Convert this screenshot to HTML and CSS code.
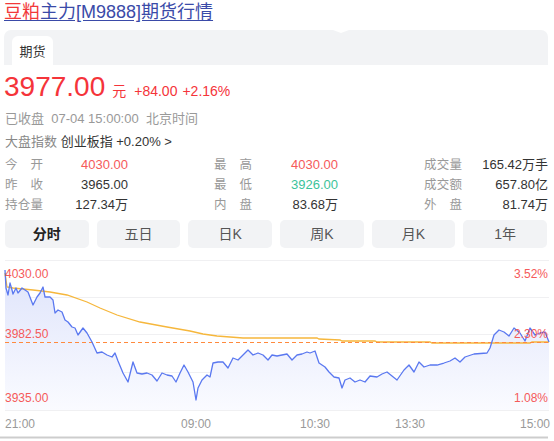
FILE: index.html
```html
<!DOCTYPE html>
<html lang="zh">
<head>
<meta charset="utf-8">
<title>豆粕主力[M9888]期货行情</title>
<link rel="stylesheet" href="styles.css">
</head>
<body>
<div class="page">
  <h1 class="title"><a class="title-link" href="#"><span class="title-red">豆粕</span>主力[M9888]期货行情</a></h1>
  <div class="tabbar">
    <div class="tab">期货</div>
    <span class="notch"></span>
  </div>
  <div class="price-row">
    <span class="price">3977.00</span>
    <span class="unit">元</span>
    <span class="change">+84.00</span>
    <span class="change">+2.16%</span>
  </div>
  <div class="status">已收盘&nbsp;&nbsp;07-04 15:00:00&nbsp;&nbsp;北京时间</div>
  <div class="index-row"><span class="muted">大盘指数</span> <span class="index-name">创业板指 +0.20%</span> <span class="chev">&gt;</span></div>
  <div class="stats">
    <div class="stat"><span class="lbl">今开</span><span class="val red">4030.00</span></div>
    <div class="stat"><span class="lbl">最高</span><span class="val red">4030.00</span></div>
    <div class="stat"><span class="lbl">成交量</span><span class="val">165.42万手</span></div>
    <div class="stat"><span class="lbl">昨收</span><span class="val">3965.00</span></div>
    <div class="stat"><span class="lbl">最低</span><span class="val green">3926.00</span></div>
    <div class="stat"><span class="lbl">成交额</span><span class="val">657.80亿</span></div>
    <div class="stat"><span class="lbl">持仓量</span><span class="val">127.34万</span></div>
    <div class="stat"><span class="lbl">内盘</span><span class="val">83.68万</span></div>
    <div class="stat"><span class="lbl">外盘</span><span class="val">81.74万</span></div>
  </div>
  <div class="periods">
    <div class="period active">分时</div>
    <div class="period">五日</div>
    <div class="period">日K</div>
    <div class="period">周K</div>
    <div class="period">月K</div>
    <div class="period">1年</div>
  </div>
  <svg class="chart" width="554" height="186" viewBox="0 255 554 186" xmlns="http://www.w3.org/2000/svg">
    <defs>
      <linearGradient id="fillg" x1="0" y1="0" x2="0" y2="1">
        <stop offset="0" stop-color="#dfe4fb"/>
        <stop offset="1" stop-color="#fafbff"/>
      </linearGradient>
    </defs>
    <g stroke="#f0f0f2" stroke-width="1">
      <line x1="5" y1="260.5" x2="549" y2="260.5"/>
      <line x1="5" y1="297.5" x2="549" y2="297.5"/>
      <line x1="5" y1="334.5" x2="549" y2="334.5"/>
      <line x1="5" y1="372.5" x2="549" y2="372.5"/>
      <line x1="5" y1="410.5" x2="549" y2="410.5"/>
    </g>
    <polygon fill="url(#fillg)" points="5,270 6,288 8,295 10,283 12,290 13,294 16,288 18,293 22,288 25,290 28,292 33,305 37,297 40,293 43,287 45,297 50,297 53,300 55,313 58,310 62,312 65,320 68,322 72,327 75,328 78,335 83,328 87,333 92,342 97,353 102,352 107,355 112,357 115,353 118,361 123,373 128,382 133,362 137,373 142,374 147,373 152,375 157,381 162,373 167,375 172,376 176,382 180,373 184,365 188,372 193,382 196,400 198,388 202,380 207,375 210,377 213,363 218,362 223,362 228,368 233,358 238,360 243,355 248,350 253,355 258,353 263,355 268,360 272,355 277,356 287,354 292,360 297,355 302,354 307,352 310,353 315,351 319,363 325,367 329,372 334,377 339,378 342,388 345,380 350,378 355,382 360,380 365,382 370,376 377,377 382,374 387,372 392,376 397,380 404,370 409,365 414,372 419,362 424,367 430,365 437,365 444,363 450,361 455,358 460,362 465,357 474,354 487,353 490,348 494,335 499,330 504,332 509,336 514,328 520,333 525,341 530,328 535,335 540,333 545,332 549,342 549,410 5,410"/>
    <polyline fill="none" stroke="#f6b73c" stroke-width="1.3" points="5,273 7,287 13,288 33,290 50,292 67,295 87,302 100,308 117,315 140,322 167,327 190,331 203,334 217,336 243,338 317,338 319,339 340,340 342,341 375,341 377,342 430,342 432,343 530,343 532,342 549,342"/>
    <line x1="5" y1="342.5" x2="549" y2="342.5" stroke="#ff8a3d" stroke-width="1" stroke-dasharray="4 3"/>
    <polyline fill="none" stroke="#5a78f0" stroke-width="1.3" stroke-linejoin="round" points="5,270 6,288 8,295 10,283 12,290 13,294 16,288 18,293 22,288 25,290 28,292 33,305 37,297 40,293 43,287 45,297 50,297 53,300 55,313 58,310 62,312 65,320 68,322 72,327 75,328 78,335 83,328 87,333 92,342 97,353 102,352 107,355 112,357 115,353 118,361 123,373 128,382 133,362 137,373 142,374 147,373 152,375 157,381 162,373 167,375 172,376 176,382 180,373 184,365 188,372 193,382 196,400 198,388 202,380 207,375 210,377 213,363 218,362 223,362 228,368 233,358 238,360 243,355 248,350 253,355 258,353 263,355 268,360 272,355 277,356 287,354 292,360 297,355 302,354 307,352 310,353 315,351 319,363 325,367 329,372 334,377 339,378 342,388 345,380 350,378 355,382 360,380 365,382 370,376 377,377 382,374 387,372 392,376 397,380 404,370 409,365 414,372 419,362 424,367 430,365 437,365 444,363 450,361 455,358 460,362 465,357 474,354 487,353 490,348 494,335 499,330 504,332 509,336 514,328 520,333 525,341 530,328 535,335 540,333 545,332 549,342"/>
    <g class="ylbl">
      <text x="5" y="278">4030.00</text>
      <text x="5" y="338">3982.50</text>
      <text x="5" y="402">3935.00</text>
      <text x="548" y="278" text-anchor="end">3.52%</text>
      <text x="548" y="338" text-anchor="end">2.30%</text>
      <text x="548" y="402" text-anchor="end">1.08%</text>
    </g>
    <g class="xlbl">
      <text x="5" y="428">21:00</text>
      <text x="196" y="428" text-anchor="middle">09:00</text>
      <text x="315" y="428" text-anchor="middle">10:30</text>
      <text x="410" y="428" text-anchor="middle">13:30</text>
      <text x="550" y="428" text-anchor="end">15:00</text>
    </g>
    <rect x="0" y="436.5" width="548" height="2" fill="#cdcdcd"/>
  </svg>
</div>
</body>
</html>
```

FILE: styles.css
```css
html, body {
  margin: 0;
  padding: 0;
  background: #fff;
}
body {
  font-family: "Liberation Sans", Arial, "Noto Sans CJK SC", sans-serif;
  color: #333;
  width: 554px;
  height: 441px;
  overflow: hidden;
}
.page {
  position: relative;
  width: 554px;
}
.title {
  margin: 0;
  padding-left: 4px;
  font-size: 18px;
  font-weight: normal;
  line-height: 24px;
  height: 24px;
}
.title-link {
  color: #3a4aa8;
  text-decoration: underline;
  text-underline-offset: 2px;
}
.title-red {
  color: #f2383a;
}
.tabbar {
  position: relative;
  margin: 6px 6px 0 4px;
  height: 35px;
  background: #f2f3f5;
  border-radius: 7px 7px 0 0;
  display: flex;
  align-items: flex-end;
  padding-left: 8px;
}
.tab {
  width: 41px;
  height: 29px;
  background: #fff;
  border-radius: 6px 6px 0 0;
  font-size: 13px;
  color: #333;
  display: flex;
  align-items: center;
  justify-content: center;
}
.notch {
  position: absolute;
  left: 329px;
  top: 0;
  width: 0;
  height: 0;
  border-left: 8px solid transparent;
  border-right: 8px solid transparent;
  border-top: 3px solid #fff;
}
.price-row {
  display: flex;
  align-items: baseline;
  padding-left: 4px;
  height: 40px;
  margin-top: 2px;
  color: #f5343a;
}
.price {
  font-size: 28px;
  line-height: 40px;
}
.unit {
  font-size: 14px;
  margin-left: 7px;
}
.change {
  font-size: 14px;
  margin-left: 5px;
}
.unit + .change {
  margin-left: 8px;
}
.status {
  padding-left: 5px;
  font-size: 13px;
  color: #999;
  height: 23px;
  line-height: 23px;
}
.index-row {
  padding-left: 5px;
  font-size: 13px;
  height: 24px;
  line-height: 24px;
}
.muted {
  color: #888;
}
.index-name {
  color: #333;
}
.chev {
  color: #333;
}
.stats {
  display: grid;
  grid-template-columns: 123px 124px 124px;
  justify-content: space-between;
  margin: 1px 6px 0 5px;
  font-size: 13px;
  line-height: 20px;
}
.stat {
  display: flex;
  justify-content: space-between;
  white-space: nowrap;
  height: 20px;
}
.lbl {
  display: inline-block;
  width: 38px;
  font-size: 12.5px;
  color: #999;
  white-space: nowrap;
  text-align: justify;
  text-align-last: justify;
}
.val {
  color: #333;
}
.red {
  color: #f55a5a;
}
.green {
  color: #3cc39a;
}
.periods {
  display: grid;
  grid-template-columns: repeat(6, 1fr);
  gap: 8px;
  margin: 5px 7px 0 5px;
}
.period {
  height: 28px;
  line-height: 28px;
  background: #f2f3f5;
  border-radius: 5px;
  text-align: center;
  font-size: 14px;
  color: #555;
}
.period.active {
  font-weight: bold;
  color: #222;
}
.chart {
  display: block;
  margin-top: 7px;
}
.ylbl text {
  font-family: "Liberation Sans", Arial, sans-serif;
  font-size: 12px;
  fill: #f55a5a;
}
.xlbl text {
  font-family: "Liberation Sans", Arial, sans-serif;
  font-size: 12px;
  fill: #999;
}
```
